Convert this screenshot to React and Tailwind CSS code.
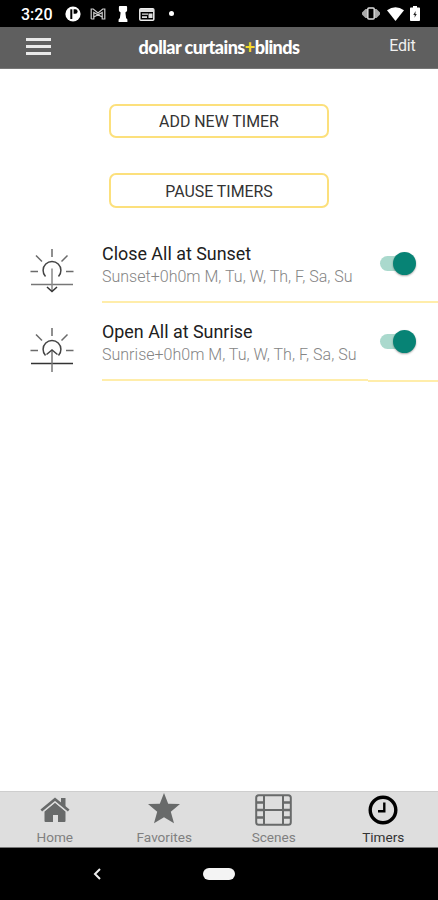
import React from "react";

function StatusBar() {
  return (
    <div className="flex h-[27px] shrink-0 items-center bg-black pr-[18px] pl-[21px] text-white">
      <span className="w-[44px] pt-[3px] text-[16px] leading-[24px] font-medium whitespace-nowrap">3:20</span>
      <svg className="mt-px h-4 w-4 shrink-0" viewBox="0 0 16 16">
        <circle cx="8" cy="8" r="7.6" fill="#fff" />
        <path d="M6.300 3.300V13" fill="none" stroke="#000" strokeWidth="2" />
        <path d="M8.600 3.300h1.800a2 2 0 0 1 0 4.400H8.600z" fill="#000" />
      </svg>
      <svg className="mt-px ml-[9px] h-4 w-4 shrink-0" viewBox="0 0 16 16" fill="none" stroke="#ccc" strokeWidth="1.2">
        <path d="M1.200 13V3h2l4.800 4 4.800-4h2v10h-2.600V6.500L3.800 11M1.200 13h2.600V6.500l8.400 4.500" />
      </svg>
      <svg className="ml-[11px] h-4 w-3 shrink-0" viewBox="0 0 12 16" fill="#fff">
        <path d="M2.800 0h6.400q.9 0 .9 1v3.400q0 1-1.600 1.800v1.300l.6 4.500 1.300 1.500V16H1.600v-2.500L2.900 12l.6-4.500V6.200Q1.900 5.400 1.900 4.400V1q0-1 .9-1z" />
      </svg>
      <svg className="mt-px ml-[10px] h-[13px] w-[16px] shrink-0" viewBox="0 0 16 13">
        <rect x=".8" y=".8" width="14" height="11.4" rx="1" fill="none" stroke="#eee" strokeWidth="1.5" />
        <path d="M1 1h14v3H1zM3 5.500h6v1.300H3zM3 8.200h5v1.800H3zM9.500 5.500h4v4.500h-4z" fill="#ddd" />
      </svg>
      <i className="ml-[14px] h-[5px] w-[5px] rounded-full bg-white" />
      <svg className="ml-auto h-[13px] w-[18px] shrink-0" viewBox="0 0 18 13">
        <path d="M5 2v9H3.500L0 7.500v-2L3.500 2zM13 2v9h1.500L18 7.500v-2L14.500 2z" fill="#aaa" />
        <rect x="5.8" y="1" width="6.4" height="11" rx="1" fill="#000" stroke="#ddd" strokeWidth="1.5" />
      </svg>
      <svg className="ml-[7px] h-[14px] w-[17px] shrink-0" viewBox="0 0 17 14" fill="#fff">
        <path d="M0 3.2Q8.5-2.8 17 3.2L8.5 14z" />
      </svg>
      <svg className="ml-[6px] h-[15px] w-[10px] shrink-0" viewBox="0 0 10 15">
        <path d="M3 0h4v1.6h2.2q.8 0 .8.8V14q0 1-.8 1H.8Q0 15 0 14V2.4q0-.8.8-.8H3z" fill="#fff" />
        <path d="M5.6 5 3.300 9h1.500l-.3 2.800L6.800 8H5.400z" fill="#222" />
      </svg>
    </div>
  );
}

function Header() {
  return (
    <header className="grid h-[42px] shrink-0 grid-cols-[1fr_auto_1fr] items-center border-b border-[#777] bg-[#5f5f5f] px-[22px] text-white">
      <div className="mb-[2px] ml-[4px] flex w-[25px] flex-col gap-[4px]">
        <i className="h-[3px] bg-[#e9e9e9]" />
        <i className="h-[3px] bg-[#e9e9e9]" />
        <i className="h-[3px] bg-[#e9e9e9]" />
      </div>
      <h1 className="pb-px font-['Lato','Open_Sans',sans-serif] text-[18px] leading-5 font-black tracking-[-0.54px] whitespace-nowrap">
        dollar curtains<span className="text-[#f5d92b]">+</span>blinds
      </h1>
      <button className="mr-[0.5px] justify-self-end pb-[4px] text-[16px] leading-5 tracking-[-0.2px] text-[#f0f0f0]">Edit</button>
    </header>
  );
}

function OutlineButton({ children, className }) {
  return (
    <button className={"w-[220px] rounded-[7px] border-2 border-[#fce07c] pt-[2px] text-[15.900px] leading-[26px] text-[#333] " + className}>
      {children}
    </button>
  );
}

function SunIcon({ down }) {
  return (
    <svg className="h-[46px] w-[44px] shrink-0" viewBox="0 0 44 46" fill="none" stroke="#6b6b6b" strokeWidth="1.5">
      <path d="M22 0v8M6 6.500l6 6M37.500 6.500l-6 6M.5 22.500H8M36 22.500h7.500" />
      <path d="M15.500 27.500a8.900 8.900 0 1 1 13 0" stroke="#444" />
      {down ? (
        <>
          <path d="M1 35.5h42" stroke="#777" />
          <path d="M22 19.5V42" stroke="#888" />
          <path d="m17 38 5 4.5 5-4.5" stroke="#333" />
        </>
      ) : (
        <>
          <path d="M1 35.5h42" stroke="#333" />
          <path d="M22 22v22" stroke="#777" />
          <path d="m16.5 26.5 5.5-4.5 5.5 4.5" stroke="#444" />
        </>
      )}
    </svg>
  );
}

function Toggle() {
  return (
    <div className="flex h-[23px] w-[36px] items-center">
      <div className="flex h-[15px] w-[34px] items-center rounded-full bg-[#aad9cd]">
        <i className="ml-[13px] h-[23px] w-[23px] shrink-0 rounded-full bg-[#078375] shadow-[0_1px_2px_rgba(0,0,0,0.35)]" />
      </div>
    </div>
  );
}

function TimerRow({ title, schedule, down }) {
  return (
    <div className="flex h-[78px] pl-[30px]">
      <div className={down ? "pt-[24px]" : "pt-[25px]"}>
        <SunIcon down={down} />
      </div>
      <div className="ml-[28px] flex flex-1 flex-col">
        <div className="flex flex-1 pr-[22px]">
          <div className="flex-1 pt-[17px] whitespace-nowrap">
            <h2 className="text-[17.900px] leading-[23px] text-[#202020]">{title}</h2>
            <p className="text-[16.050px] leading-[24px] font-light text-[#858585]">{schedule}</p>
          </div>
          <div className="pt-[27px]">
            <Toggle />
          </div>
        </div>
        {down ? (
          <div className="h-[2px] bg-[#ffedaa]" />
        ) : (
          <div className="flex h-[2px] items-start">
            <i className="h-[2px] w-[266px] bg-[#ffedaa]" />
            <i className="mt-px h-[2px] flex-1 bg-[#ffedaa]" />
          </div>
        )}
      </div>
    </div>
  );
}

function Tab({ label, active, children }) {
  return (
    <div className={"flex flex-1 flex-col items-center " + (active ? "text-black" : "text-[#686a6a]")}>
      <div className="flex h-[36px] items-center">{children}</div>
      <span className={"text-[13.600px] leading-[18px] " + (active ? "text-[#333]" : "text-[#808080]")}>{label}</span>
    </div>
  );
}

export default function App() {
  return (
    <main className="flex h-[900px] w-[438px] flex-col overflow-hidden bg-white font-['Roboto',sans-serif]">
      <StatusBar />
      <Header />
      <div className="flex flex-1 flex-col">
        <div className="flex flex-col items-center pt-[35px]">
          <OutlineButton className="h-[34px]">ADD NEW TIMER</OutlineButton>
          <OutlineButton className="mt-[35px] h-[35px]">PAUSE TIMERS</OutlineButton>
        </div>
        <div className="mt-[17px]">
          <TimerRow down title="Close All at Sunset" schedule="Sunset+0h0m M, Tu, W, Th, F, Sa, Su" />
          <TimerRow title="Open All at Sunrise" schedule="Sunrise+0h0m M, Tu, W, Th, F, Sa, Su" />
        </div>
      </div>
      <nav className="flex h-[57px] shrink-0 border-t border-b border-t-[#cecece] border-b-[#777] bg-[#dedede]">
        <Tab label="Home">
          <svg className="h-[26px] w-[30px]" viewBox="0 0 30 26" fill="currentColor">
            <path d="M15 5.8 25.5 14.6V24q0 1-1 1H18v-7h-5v7H5.500q-1 0-1-1v-9.400z" />
            <path d="M1.300 13.500 15 2.300 28.700 13.500" fill="none" stroke="#dedede" strokeWidth="5" />
            <path d="M1.300 13.500 15 2.300 28.700 13.500" fill="none" stroke="currentColor" strokeWidth="2.600" />
            <path d="M21 1h4.500v9L21 6.500z" />
          </svg>
        </Tab>
        <Tab label="Favorites">
          <svg className="mb-[4px] h-[31px] w-[32px]" viewBox="0 0 32 31" fill="currentColor">
            <path d="m16 0 4.200 10.700L32 11l-9.200 7.700L26 30.300l-10-6-10 6 3.200-11.600L0 11l11.800-.3z" />
          </svg>
        </Tab>
        <Tab label="Scenes">
          <svg className="h-[32px] w-[37px]" viewBox="0 0 37 32" fill="none" stroke="currentColor" strokeWidth="2">
            <rect x="1.200" y="1.200" width="34.600" height="29.600" rx="2.500" />
            <path d="M9 1v30M28 1v30M9 16h19" />
            <path d="M1 8.500h8M1 16h8M1 23.500h8M28 8.500h8M28 16h8M28 23.500h8" strokeWidth="2.600" />
          </svg>
        </Tab>
        <Tab label="Timers" active>
          <svg className="h-[30px] w-[30px]" viewBox="0 0 30 30" fill="none" stroke="currentColor">
            <circle cx="15" cy="15" r="12.800" strokeWidth="3.400" />
            <path d="M16.300 7.500v8.800H10" strokeWidth="2.400" />
          </svg>
        </Tab>
      </nav>
      <div className="grid h-[52px] shrink-0 grid-cols-[1fr_auto_1fr] items-center bg-black px-[92px]">
        <svg className="h-[12px] w-[10px]" viewBox="0 0 10 12" fill="none" stroke="#eee" strokeWidth="2">
          <path d="M8 1 3 6l5 5" />
        </svg>
        <i className="h-[12px] w-[32px] rounded-full bg-[#f4f4f4]" />
        <span />
      </div>
    </main>
  );
}
